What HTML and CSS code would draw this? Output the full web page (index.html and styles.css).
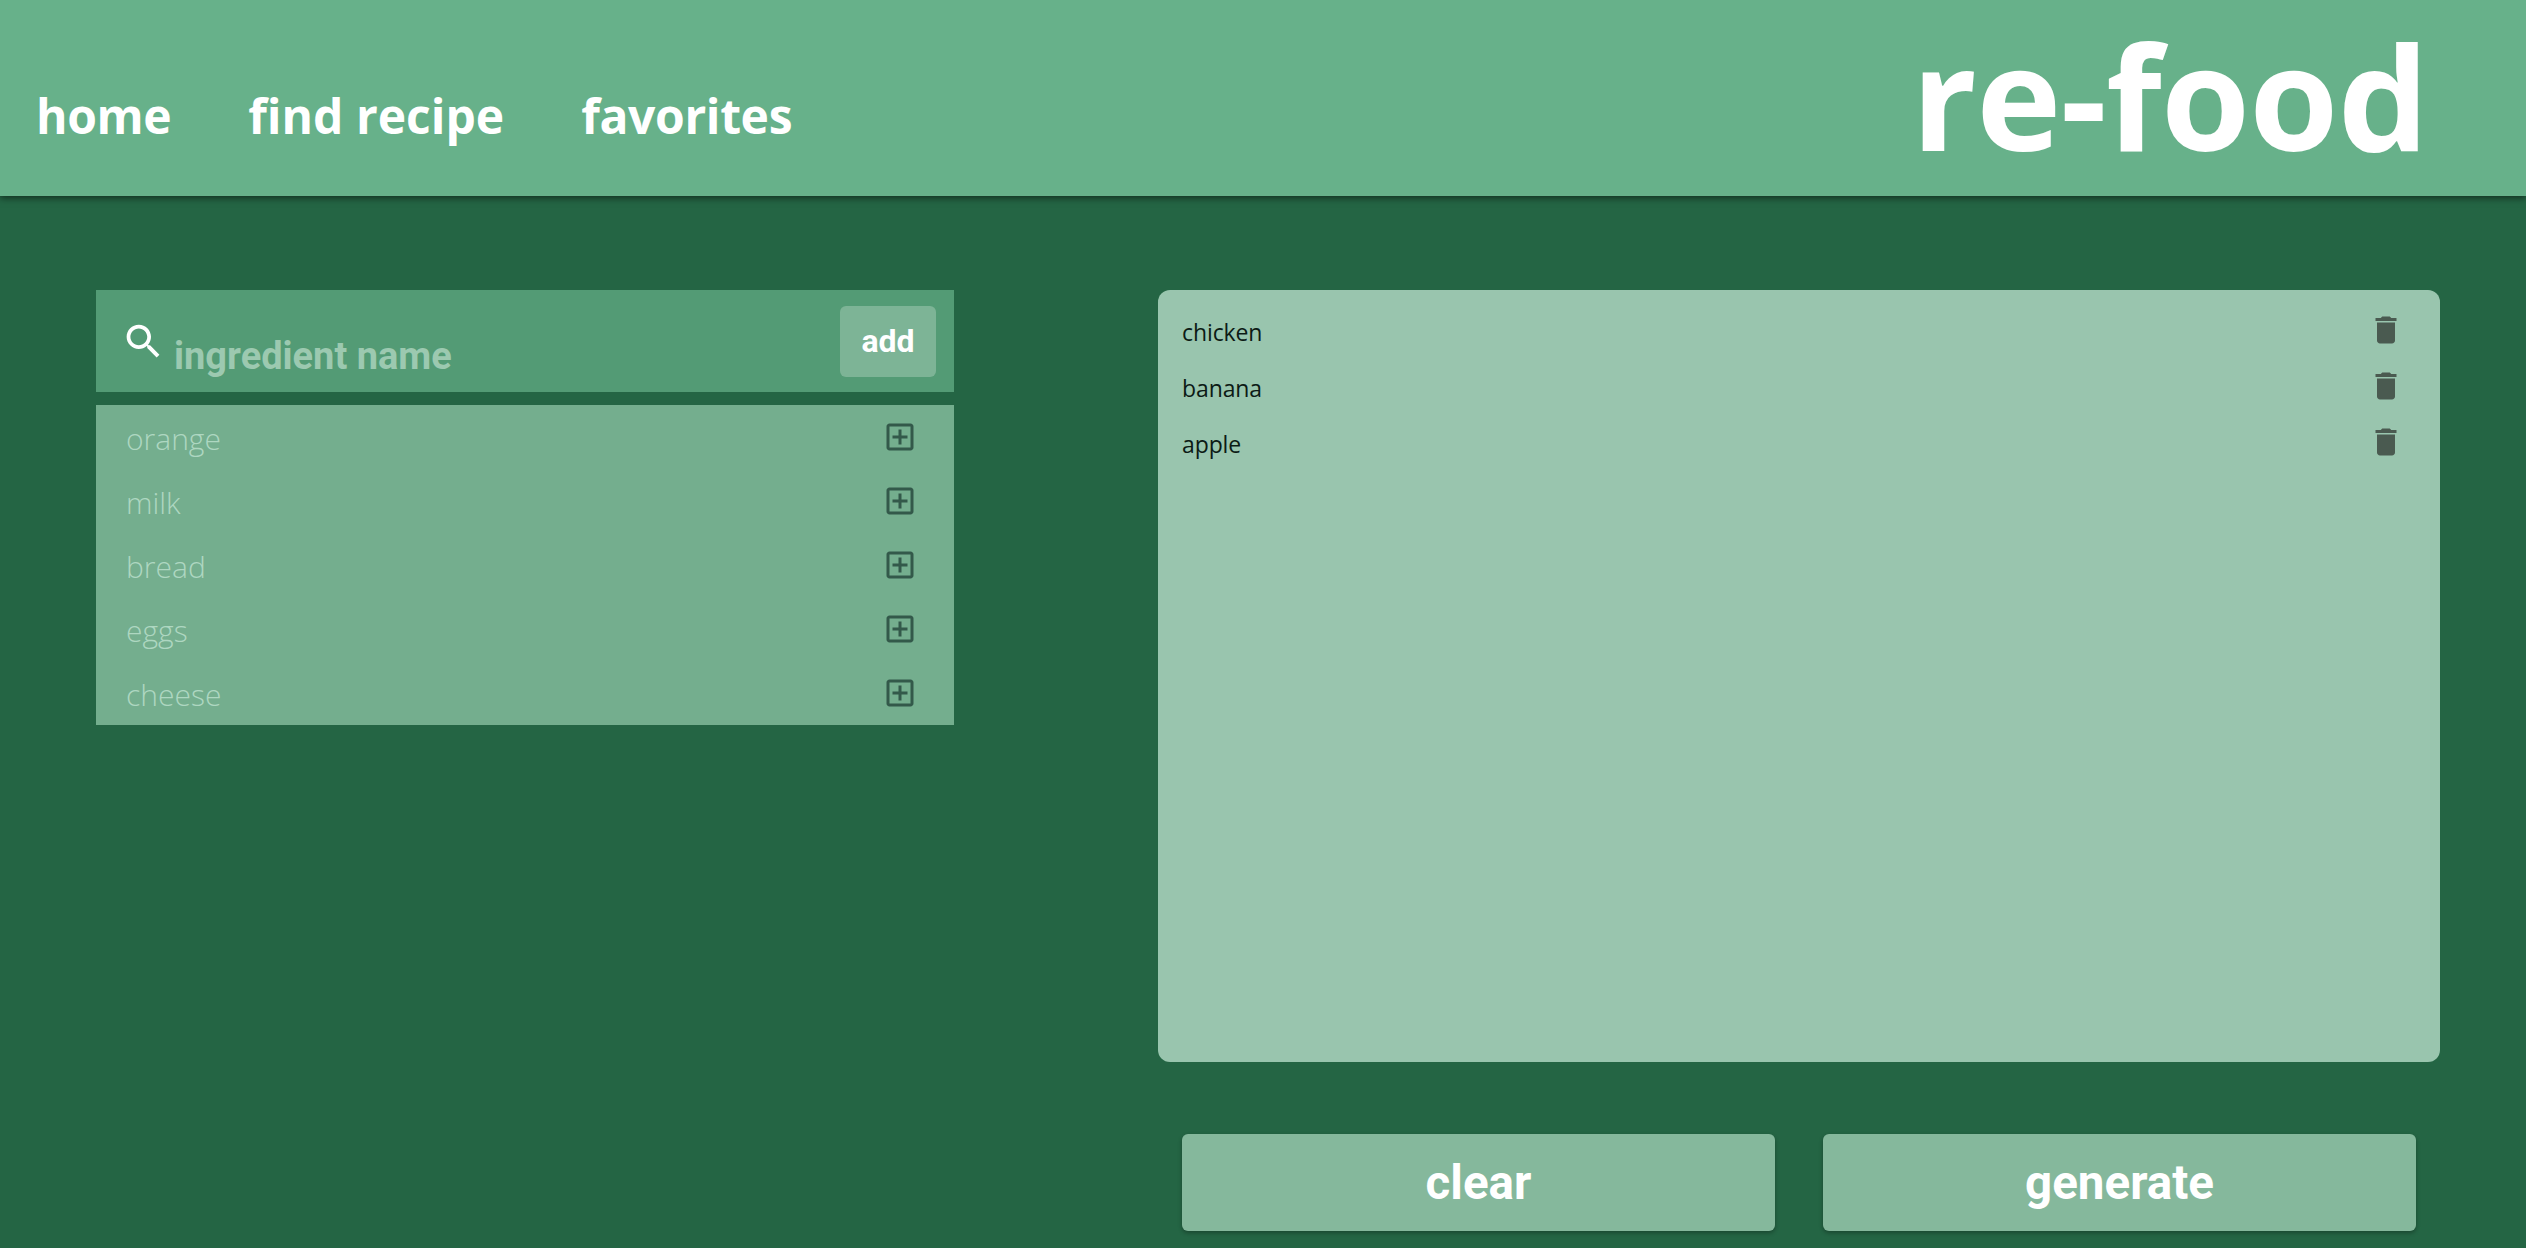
FILE: index.html
```html
<!DOCTYPE html>
<html lang="en">
<head>
<meta charset="utf-8">
<title>re-food</title>
<link rel="stylesheet" href="styles.css">
</head>
<body>
<header class="topbar">
  <nav class="nav">
    <a class="nav-link">home</a>
    <a class="nav-link nav-link-wide">find recipe</a>
    <a class="nav-link">favorites</a>
  </nav>
  <div class="logo">re-food</div>
</header>
<main class="main">
  <section class="left">
    <div class="search">
      <svg class="search-icon" viewBox="0 0 24 24"><path d="M15.5 14h-.79l-.28-.27C15.41 12.59 16 11.11 16 9.5 16 5.91 13.09 3 9.5 3S3 5.91 3 9.5 5.91 16 9.5 16c1.61 0 3.09-.59 4.23-1.57l.27.28v.79l5 4.99L20.49 19l-4.99-5zm-6 0C7.01 14 5 11.99 5 9.5S7.01 5 9.5 5 14 7.01 14 9.5 11.99 14 9.5 14z"/></svg>
      <span class="placeholder">ingredient name</span>
      <button class="add-btn">add</button>
    </div>
    <ul class="suggest">
      <li class="suggest-row"><span>orange</span><svg class="row-icon" viewBox="0 0 24 24"><path d="M19 3H5c-1.1 0-2 .9-2 2v14c0 1.1.9 2 2 2h14c1.1 0 2-.9 2-2V5c0-1.1-.9-2-2-2zm0 16H5V5h14v14zm-8-2h2v-4h4v-2h-4V7h-2v4H7v2h4z"/></svg></li>
      <li class="suggest-row"><span>milk</span><svg class="row-icon" viewBox="0 0 24 24"><path d="M19 3H5c-1.1 0-2 .9-2 2v14c0 1.1.9 2 2 2h14c1.1 0 2-.9 2-2V5c0-1.1-.9-2-2-2zm0 16H5V5h14v14zm-8-2h2v-4h4v-2h-4V7h-2v4H7v2h4z"/></svg></li>
      <li class="suggest-row"><span>bread</span><svg class="row-icon" viewBox="0 0 24 24"><path d="M19 3H5c-1.1 0-2 .9-2 2v14c0 1.1.9 2 2 2h14c1.1 0 2-.9 2-2V5c0-1.1-.9-2-2-2zm0 16H5V5h14v14zm-8-2h2v-4h4v-2h-4V7h-2v4H7v2h4z"/></svg></li>
      <li class="suggest-row"><span>eggs</span><svg class="row-icon" viewBox="0 0 24 24"><path d="M19 3H5c-1.1 0-2 .9-2 2v14c0 1.1.9 2 2 2h14c1.1 0 2-.9 2-2V5c0-1.1-.9-2-2-2zm0 16H5V5h14v14zm-8-2h2v-4h4v-2h-4V7h-2v4H7v2h4z"/></svg></li>
      <li class="suggest-row"><span>cheese</span><svg class="row-icon" viewBox="0 0 24 24"><path d="M19 3H5c-1.1 0-2 .9-2 2v14c0 1.1.9 2 2 2h14c1.1 0 2-.9 2-2V5c0-1.1-.9-2-2-2zm0 16H5V5h14v14zm-8-2h2v-4h4v-2h-4V7h-2v4H7v2h4z"/></svg></li>
    </ul>
  </section>
  <section class="right">
    <ul class="chosen">
      <li class="chosen-row"><span>chicken</span><svg class="row-icon trash" viewBox="0 0 24 24"><path d="M6 19c0 1.1.9 2 2 2h8c1.1 0 2-.9 2-2V7H6v12zM19 4h-3.5l-1-1h-5l-1 1H5v2h14V4z"/></svg></li>
      <li class="chosen-row"><span>banana</span><svg class="row-icon trash" viewBox="0 0 24 24"><path d="M6 19c0 1.1.9 2 2 2h8c1.1 0 2-.9 2-2V7H6v12zM19 4h-3.5l-1-1h-5l-1 1H5v2h14V4z"/></svg></li>
      <li class="chosen-row"><span>apple</span><svg class="row-icon trash" viewBox="0 0 24 24"><path d="M6 19c0 1.1.9 2 2 2h8c1.1 0 2-.9 2-2V7H6v12zM19 4h-3.5l-1-1h-5l-1 1H5v2h14V4z"/></svg></li>
    </ul>
    <div class="actions">
      <button class="action">clear</button>
      <button class="action">generate</button>
    </div>
  </section>
</main>
</body>
</html>
```

FILE: styles.css
```css
* { box-sizing: border-box; }
html, body { margin: 0; height: 100%; overflow: hidden; }
body { background: #246544; font-family: "Open Sans", "Noto Sans", sans-serif; }
ul { list-style: none; margin: 0; padding: 0; }

.topbar {
  height: 196px;
  background: #67b18a;
  box-shadow: 0 2px 7px rgba(0, 0, 0, .55);
  display: flex;
  justify-content: space-between;
  position: relative;
  padding: 0 98px 0 36px;
}
.nav { display: flex; gap: 77px; padding-top: 83px; }
.nav-link { color: #fff; font-size: 48px; font-weight: 700; line-height: 65px; letter-spacing: -.35px; }
.nav-link-wide { letter-spacing: 0; }
.logo { color: #fff; font-size: 144px; font-weight: 700; line-height: 190px; letter-spacing: -.8px; }

.main { display: flex; padding: 94px 86px 0 96px; gap: 204px; }
.left { width: 858px; flex: none; }
.search {
  height: 102px;
  background: #539b75;
  display: flex;
  align-items: flex-start;
  padding: 16px 18px 0 25px;
}
.search-icon { width: 45px; height: 45px; fill: #fff; margin-top: 13px; flex: none; }
.placeholder { color: #9cc9b0; font: 700 38px/48px Roboto, sans-serif; margin: 26px 0 0 8px; flex: 1; }
.add-btn {
  width: 96px;
  height: 71px;
  border: 0;
  border-radius: 6px;
  background: #7db496;
  color: #fff;
  font: 700 32px/1 Roboto, sans-serif;
  padding: 0 0 2px;
}
.suggest { margin-top: 13px; height: 320px; background: #74ae8e; padding: 0 36px 0 30px; overflow: hidden; }
.suggest-row { height: 64px; display: flex; justify-content: space-between; align-items: center; color: #aed7c1; font-size: 30px; font-weight: 300; }
.suggest-row span { padding-top: 2px; }

.right { flex: 1; }
.chosen { height: 772px; background: #99c5ae; border-radius: 12px; padding: 13px 36px 0 24px; }
.chosen-row { height: 56px; display: flex; justify-content: space-between; align-items: center; color: #0c1a15; font-size: 23px; letter-spacing: -.1px; }
.chosen-row span { padding-top: 2px; }
.row-icon { width: 36px; height: 36px; fill: #33594a; flex: none; }
.trash { fill: #4a5a50; margin-top: -2px; }
.actions { display: flex; gap: 48px; padding: 0 24px; margin-top: 72px; }
.action {
  flex: 1;
  height: 97px;
  border: 0;
  border-radius: 6px;
  background: #85b89c;
  color: #fff;
  font: 700 47.5px/1 Roboto, sans-serif;
  padding: 2px 0 0;
  box-shadow: 0 2px 4px rgba(0, 0, 0, .3);
}
```
